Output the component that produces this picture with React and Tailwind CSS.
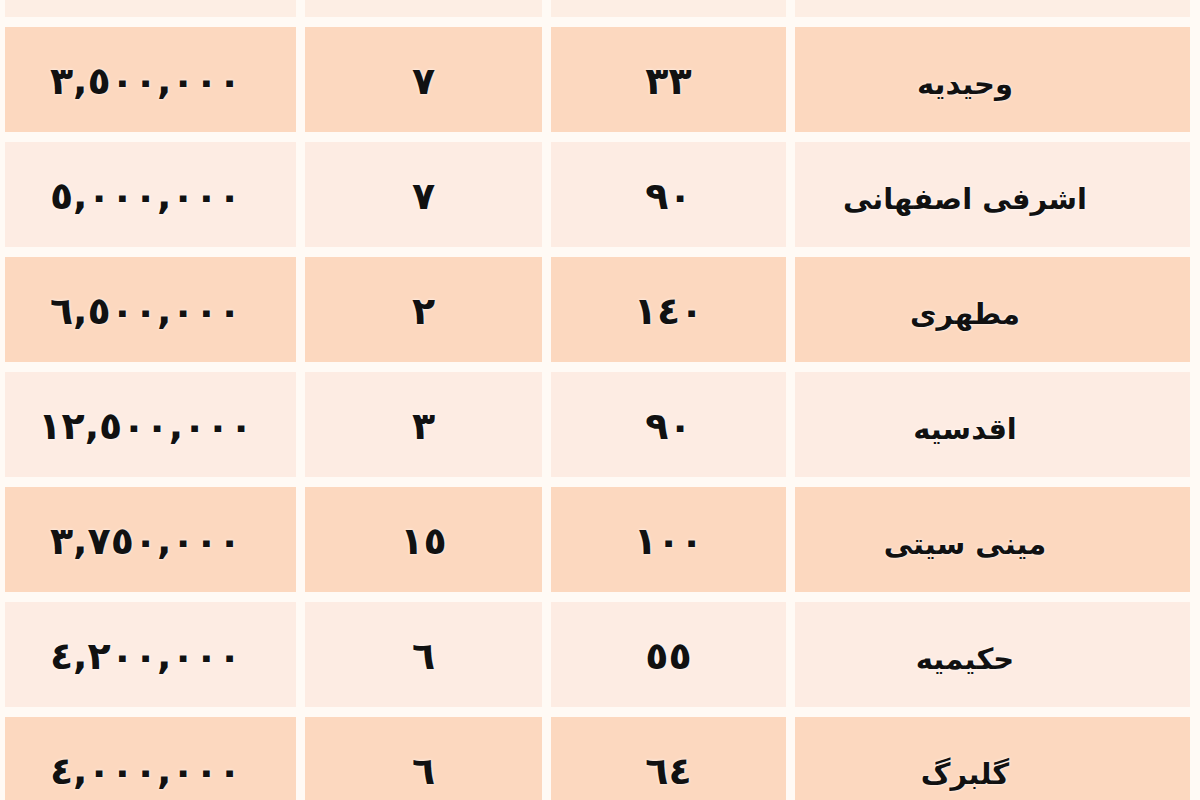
import React from 'react';

const rows = [
  { price: '٣,٥٠٠,٠٠٠', count: '٧', area: '٣٣', name: 'وحیدیه' },
  { price: '٥,٠٠٠,٠٠٠', count: '٧', area: '٩٠', name: 'اشرفی اصفهانی' },
  { price: '٦,٥٠٠,٠٠٠', count: '٢', area: '١٤٠', name: 'مطهری' },
  { price: '١٢,٥٠٠,٠٠٠', count: '٣', area: '٩٠', name: 'اقدسیه' },
  { price: '٣,٧٥٠,٠٠٠', count: '١٥', area: '١٠٠', name: 'مینی سیتی' },
  { price: '٤,٢٠٠,٠٠٠', count: '٦', area: '٥٥', name: 'حکیمیه' },
  { price: '٤,٠٠٠,٠٠٠', count: '٦', area: '٦٤', name: 'گلبرگ' },
];

const Cell = ({ bg, className = '', children }) => (
  <div className={`${bg} flex items-center justify-center pt-[4px] ${className}`}>
    {children}
  </div>
);

const App = () => {
  return (
    <div className="w-[1200px] h-[800px] overflow-hidden bg-[#fffaf5] pl-[5px] font-['DejaVu_Sans',sans-serif] font-bold text-[38px] text-[#111] [text-shadow:0_0_3px_#fff]">
      <div className="grid grid-cols-[291px_237px_235px_395px] gap-x-[9px] gap-y-[10px] auto-rows-[105px] grid-rows-[17px]">
        <div className="bg-[#fdeee4]" />
        <div className="bg-[#fdeee4]" />
        <div className="bg-[#fdeee4]" />
        <div className="bg-[#fdeee4]" />
        {rows.map((r, i) => {
          const bg = i % 2 === 0 ? 'bg-[#fcd8bf]' : 'bg-[#fdece3]';
          return (
            <React.Fragment key={i}>
              <Cell bg={bg} className="pr-[10px]">
                <span dir="ltr" className="tracking-[2px]">{r.price}</span>
              </Cell>
              <Cell bg={bg}>{r.count}</Cell>
              <Cell bg={bg}>{r.area}</Cell>
              <Cell bg={bg} className="pr-[55px]">
                <span dir="rtl" className="text-[29px] pt-[6px]">{r.name}</span>
              </Cell>
            </React.Fragment>
          );
        })}
      </div>
    </div>
  );
};

export default App;
